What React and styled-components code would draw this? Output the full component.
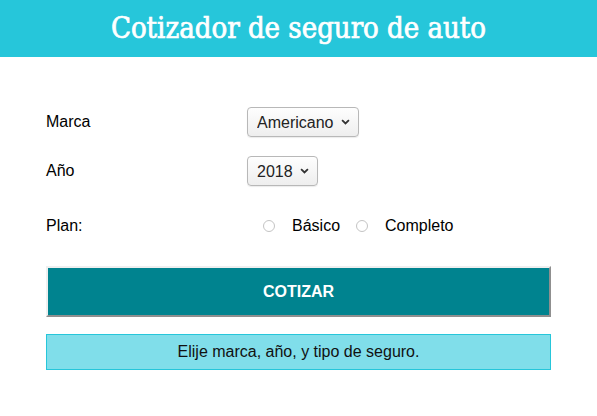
import styled, { createGlobalStyle } from 'styled-components';

const GlobalStyle = createGlobalStyle`
	body {
		margin: 0;
		font-family: "Liberation Sans", Arial, sans-serif;
		background: #fff;
		color: #000;
	}
`;

const chevron =
	"data:image/svg+xml;utf8,<svg xmlns='http://www.w3.org/2000/svg' width='9' height='6' viewBox='0 0 9 6'><path d='M1.1 1.1 4.5 4.5 7.9 1.1' fill='none' stroke='%23333' stroke-width='1.8'/></svg>";

const Header = styled.header`
	background-color: #26c6da;
	height: 57px;
	display: flex;
	align-items: center;
	justify-content: center;
`;

const Title = styled.h1`
	margin: 0 0 1px;
	color: #fff;
	font-family: "DejaVu Serif", serif;
	font-stretch: condensed;
	font-weight: 400;
	font-size: 29px;
	-webkit-text-stroke: 0.7px #fff;
`;

const Form = styled.form`
	width: 505px;
	margin: 0 auto;
	padding-top: 50px;
`;

const Field = styled.div`
	display: flex;
	align-items: center;
	margin-bottom: ${(props) => props.gap || '19px'};
`;

const Label = styled.label`
	flex: 0 0 201px;
	font-size: 16px;
`;

const Select = styled.select`
	appearance: none;
	font-family: "Liberation Sans", Arial, sans-serif;
	font-size: 16px;
	color: #222;
	height: 30px;
	padding: 0 24px 0 9px;
	border: 1px solid #b8b8b8;
	border-radius: 4px;
	background: url("${chevron}") no-repeat right 8px center,
		linear-gradient(#fefefe, #eeeeee);
	box-shadow: 0 1px 1px rgba(0, 0, 0, 0.08);
`;

const Radio = styled.input`
	appearance: none;
	width: 12px;
	height: 12px;
	margin: 0 17px 0 16px;
	border: 1px solid #c4c4c4;
	border-radius: 50%;
	background: #fff;
`;

const RadioText = styled.span`
	font-size: 16px;
`;

const Button = styled.button`
	display: block;
	width: 100%;
	height: 51px;
	margin-top: 31px;
	background-color: #00838f;
	color: #fff;
	border-style: solid;
	border-width: 2px;
	border-color: #efefef #8f8f8f #8f8f8f #efefef;
	font-family: "Liberation Sans", Arial, sans-serif;
	font-size: 16px;
	font-weight: bold;
	text-transform: uppercase;
`;

const Message = styled.div`
	margin-top: 17px;
	background-color: #80deea;
	border: 1px solid #26c6da;
	padding: 8px;
	text-align: center;
	font-size: 16px;
	color: #111;
`;

export default function App() {
	return (
		<>
			<GlobalStyle />
			<Header>
				<Title>Cotizador de seguro de auto</Title>
			</Header>
			<Form>
				<Field>
					<Label>Marca</Label>
					<Select defaultValue="americano">
						<option value="americano">Americano</option>
						<option value="europeo">Europeo</option>
						<option value="asiatico">Asiatico</option>
					</Select>
				</Field>
				<Field gap="31px">
					<Label>Año</Label>
					<Select defaultValue="2018">
						<option value="2018">2018</option>
						<option value="2017">2017</option>
					</Select>
				</Field>
				<Field gap="0">
					<Label>Plan:</Label>
					<Radio type="radio" name="plan" value="basico" />
					<RadioText>Básico</RadioText>
					<Radio type="radio" name="plan" value="completo" />
					<RadioText>Completo</RadioText>
				</Field>
				<Button type="button">Cotizar</Button>
				<Message>Elije marca, año, y tipo de seguro.</Message>
			</Form>
		</>
	);
}
